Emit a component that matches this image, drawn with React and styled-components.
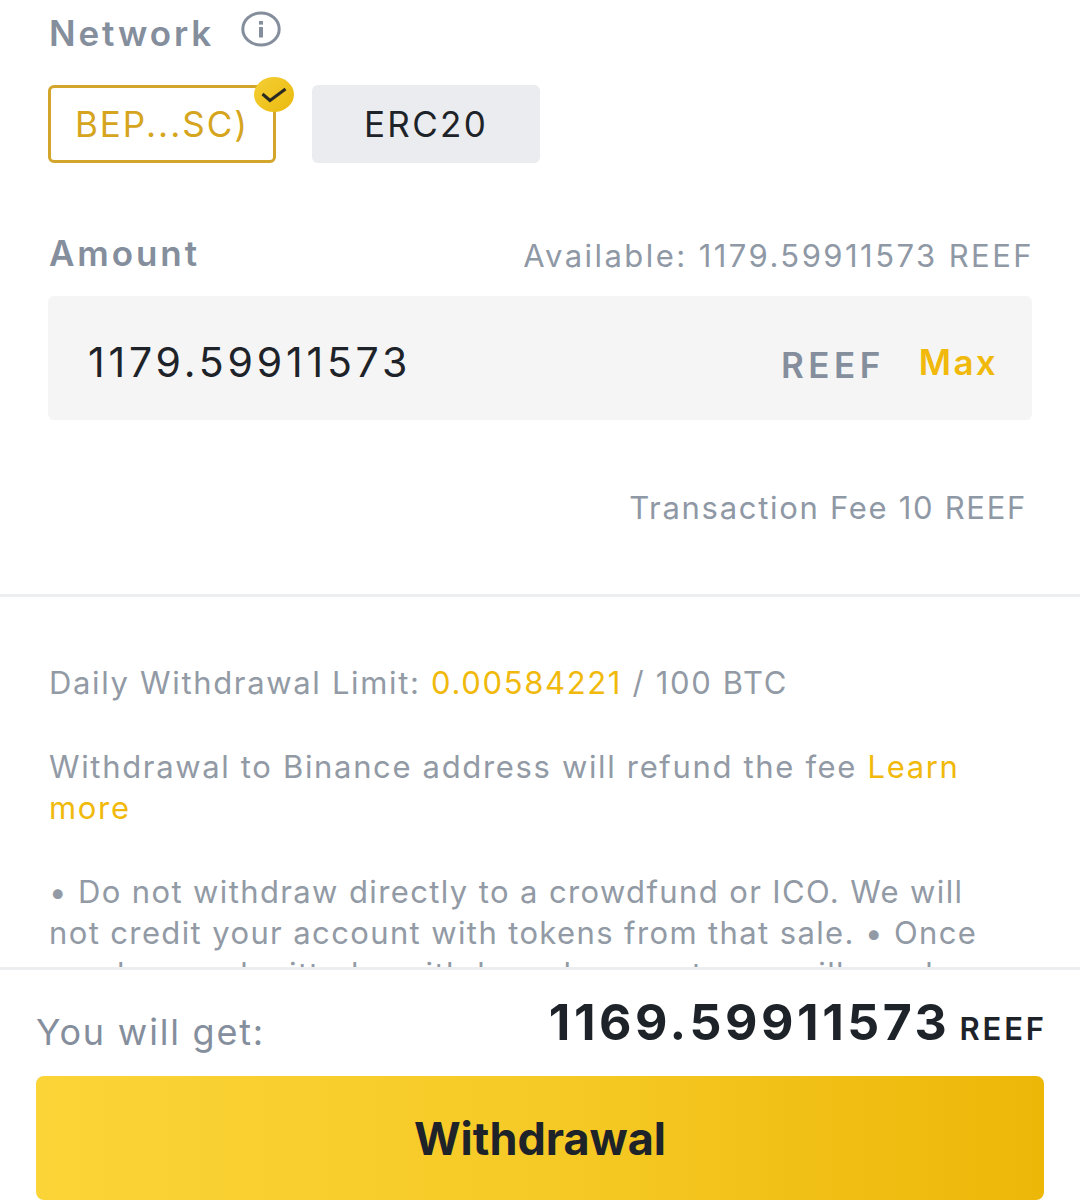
import React from "react";
import styled, { createGlobalStyle } from "styled-components";

const Global = createGlobalStyle`
  html, body { margin: 0; padding: 0; background: #fff; }
  body { font-family: Inter, "Liberation Sans", sans-serif; }
`;
const Page = styled.div`
  width: 1080px; height: 1200px; display: flex; flex-direction: column; overflow: hidden; background: #fff;
`;
const Scroll = styled.div`
  height: 967px; overflow: hidden; flex: none;
`;
const Form = styled.section`
  padding: 10px 48px 0 48px; height: 597px; box-sizing: border-box; border-bottom: 3px solid #eceef0;
`;
const LabelRow = styled.div`
  display: flex; align-items: center; gap: 27px; height: 46px;
`;
const Label = styled.span`
  font-size: 35px; line-height: 46px; font-weight: 600; color: #848e9c; letter-spacing: 2.9px; padding-left: 1px;
`;
const Chips = styled.div`
  display: flex; gap: 36px; margin-top: 29px;
`;
const Chip = styled.div`
  position: relative; width: 228px; height: 78px; box-sizing: border-box; border-radius: 6px;
  display: flex; align-items: center; justify-content: center; font-size: 35px;
  letter-spacing: ${p => (p.$active ? "2px" : "2.3px")};
  color: ${p => (p.$active ? "#d6a520" : "#1e2329")};
  background: ${p => (p.$active ? "#fff" : "#eaecef")};
  border: ${p => (p.$active ? "3px solid #d3a52a" : "none")};
`;
const Badge = styled.span`
  position: absolute; top: -11px; right: -21px; width: 40px; height: 35px;
  display: flex; align-items: center; justify-content: center;
  border-radius: 50%; background: linear-gradient(135deg, #f5cf35, #eab90f);
`;
const AmountHead = styled.div`
  display: flex; align-items: center; justify-content: space-between; margin-top: 67px; height: 46px;
`;
const Available = styled.span`
  font-size: 31px; color: #8f98a5; letter-spacing: 2.45px; margin-right: -2px; padding-top: 4px;
`;
const AmountBox = styled.div`
  display: flex; align-items: center; height: 124px; margin-top: 20px; border-radius: 6px; background: #f5f5f5;
  padding: 0 34px 0 40px;
`;
const AmountValue = styled.span`
  flex: 1; font-size: 41px; color: #1e2329; letter-spacing: 3.8px; padding-top: 7px;
`;
const Unit = styled.span`
  font-size: 35px; font-weight: 600; color: #848e9c; letter-spacing: 4.5px; margin-right: 34px; padding-top: 13px;
`;
const Max = styled.span`
  font-size: 35px; font-weight: 600; color: #f0b90b; letter-spacing: 2.3px; padding-top: 7px;
`;
const Fee = styled.div`
  margin-top: 66px; padding-right: 5px; text-align: right; font-size: 31px; line-height: 44px; color: #8f98a5; letter-spacing: 1.7px;
`;
const Notes = styled.section`
  padding: 0 70px 0 49px; font-size: 31px; line-height: 41px; color: #929aa5; letter-spacing: 1.66px;
`;
const Note = styled.p`
  margin: ${p => p.$top}px 0 0;
  letter-spacing: ${p => p.$spacing || "inherit"};
`;
const Link = styled.span`
  color: #f0b90b;
`;
const Footer = styled.footer`
  flex: 1; border-top: 3px solid #eceef0; padding: 0 36px; display: flex; flex-direction: column;
`;
const GetRow = styled.div`
  display: flex; justify-content: space-between; align-items: flex-start; height: 106px; padding-top: 22px; box-sizing: border-box;
`;
const GetLabel = styled.span`
  font-size: 36px; color: #848e9c; letter-spacing: 1.8px; margin-top: 18px;
`;
const GetValue = styled.span`
  font-size: 50px; font-weight: 700; color: #1e2329; letter-spacing: 3.55px;
`;
const GetUnit = styled.span`
  font-size: 31px; font-weight: 600; letter-spacing: 2.9px; margin-left: 9px; margin-right: -3px; color: #1e2329;
`;
const Submit = styled.button`
  display: block; width: 100%; height: 124px; flex: none; border: none; border-radius: 8px;
  background: linear-gradient(90deg, #fbd437 0%, #f6ca26 50%, #edb708 100%);
  font-family: inherit; font-size: 45px; font-weight: 700; color: #1e2329;
`;

const InfoIcon = () => (
  <svg width="40" height="36" viewBox="0 0 40 36" fill="none" style={{ marginTop: -8 }}>
    <ellipse cx="20" cy="18" rx="18.2" ry="16" stroke="#848e9c" strokeWidth="3" />
    <rect x="18" y="16" width="4" height="10.5" fill="#848e9c" />
    <rect x="18" y="10" width="4" height="3.6" fill="#848e9c" />
  </svg>
);

const Check = () => (
  <svg width="26" height="18" viewBox="0 0 26 18" fill="none">
    <path d="M1.5 8 L9 14.5 L24.5 3" stroke="#2b2a22" strokeWidth="3" />
  </svg>
);

export default function App() {
  return (
    <Page>
      <Global />
      <Scroll>
        <Form>
          <LabelRow>
            <Label>Network</Label>
            <InfoIcon />
          </LabelRow>
          <Chips>
            <Chip $active>
              BEP...SC)
              <Badge><Check /></Badge>
            </Chip>
            <Chip>ERC20</Chip>
          </Chips>
          <AmountHead>
            <Label>Amount</Label>
            <Available>Available: 1179.59911573 REEF</Available>
          </AmountHead>
          <AmountBox>
            <AmountValue>1179.59911573</AmountValue>
            <Unit>REEF</Unit>
            <Max>Max</Max>
          </AmountBox>
          <Fee>Transaction Fee 10 REEF</Fee>
        </Form>
        <Notes>
          <Note $top={65}>Daily Withdrawal Limit: <Link>0.00584221</Link> / 100 BTC</Note>
          <Note $top={43}>Withdrawal to Binance address will refund the fee <Link>Learn more</Link></Note>
          <Note $top={43} $spacing="1.38px">• Do not withdraw directly to a crowdfund or ICO. We will not credit your account with tokens from that sale. • Once you have submitted a withdrawal request, you will need</Note>
        </Notes>
      </Scroll>
      <Footer>
        <GetRow>
          <GetLabel>You will get:</GetLabel>
          <span>
            <GetValue>1169.59911573</GetValue>
            <GetUnit>REEF</GetUnit>
          </span>
        </GetRow>
        <Submit>Withdrawal</Submit>
      </Footer>
    </Page>
  );
}
